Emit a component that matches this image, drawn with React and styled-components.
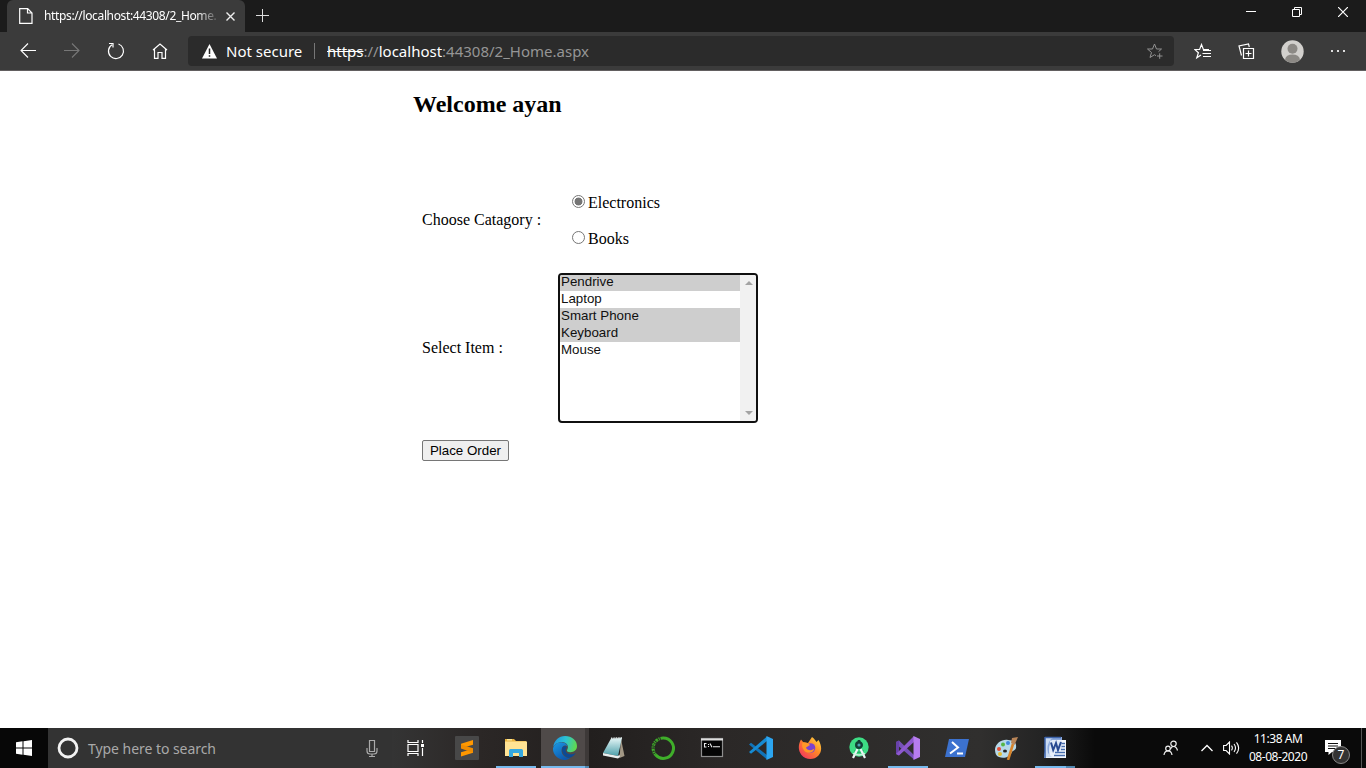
import React from 'react';
import styled, { createGlobalStyle } from 'styled-components';

const Global = createGlobalStyle`
  * { box-sizing: border-box; }
  body { margin: 0; background: #fff; overflow: hidden; }
`;
const ui = '"Noto Sans", "Open Sans", sans-serif';
const arial = '"Liberation Sans", Arial, sans-serif';
const serif = '"Liberation Serif", "Times New Roman", serif';

const Screen = styled.div`
  width: 1366px; height: 768px; display: flex; flex-direction: column;
`;
const Icon = styled.svg.attrs((p) => ({ viewBox: `0 0 ${p.$w} ${p.$h || p.$w}` }))`
  width: ${(p) => p.$w}px; height: ${(p) => p.$h || p.$w}px;
  display: block; flex: none; fill: none; margin-left: ${(p) => p.$left || 0}px;
  stroke: ${(p) => p.$c || 'none'}; stroke-width: ${(p) => p.$s || 1.2};
`;
const TitleBar = styled.header`
  height: 32px; background: #1b1b1b; display: flex; align-items: flex-start; padding-left: 7px;
`;
const Tab = styled.div`
  width: 238px; height: 32px; background: #3b3b3b; border-radius: 6px 6px 0 0;
  display: flex; align-items: center; padding: 0 9px 0 12px;
`;
const TabTitle = styled.span`
  margin-left: 11px; width: 173px; white-space: nowrap;
  font: 12px/20px ${ui}; letter-spacing: -0.36px; color: #fff;
  mask-image: linear-gradient(90deg, #000 88%, rgba(0, 0, 0, 0.15) 100%);
`;
const NewTab = styled.div` padding: 9px 0 0 11px; `;
const WindowButtons = styled.div`
  margin-left: auto; display: flex; height: 24px; align-items: center;
`;
const WindowButton = styled.div`
  width: 46px; height: 24px; display: flex; align-items: center; justify-content: center;
`;
const Toolbar = styled.nav`
  height: 39px; background: #3b3b3b; border-bottom: 1px solid #625f60;
  display: flex; align-items: center; padding: 0 0 0 6px;
`;
const ToolButton = styled.div`
  width: ${(p) => p.$w || 44}px; height: 38px; display: flex; align-items: center; justify-content: center;
`;
const ToolGroup = styled.div`
  display: flex; margin-left: ${(p) => p.$gap || 0}px;
`;
const Address = styled.div`
  width: 986px; flex: none; height: 30px; margin-left: 6px; background: #2b2b2b; border-radius: 4px;
  display: flex; align-items: center; padding: 0 10px 0 13px;
  font: 15px/24px ${ui}; white-space: pre; color: #fff;
`;
const Security = styled.span` margin-left: 8px; width: 88px; `;
const Divider = styled.i` width: 1px; height: 16px; background: #777; margin-right: 12px; `;
const Url = styled.span`
  flex: 1; color: #959595;
  b { font-weight: 400; color: #fff; }
  s { color: #fff; }
`;

const Page = styled.main`
  flex: 1; background: #fff; padding-left: 413px;
  font: 16px/18px ${serif}; color: #000;
`;
const Heading = styled.h2`
  margin: 0; padding-top: 20px; height: 110px; font: bold 24px/27px ${serif};
`;
const Row = styled.div`
  display: flex; align-items: center; height: ${(p) => p.$h}px; padding-left: 9px;
`;
const Label = styled.div` width: 136px; padding-bottom: ${(p) => p.$bottom || 0}px; `;
const RadioList = styled.div` display: flex; flex-direction: column; gap: 18px; padding-left: 14px; `;
const RadioRow = styled.label` display: flex; align-items: flex-start; height: 18px; gap: 3px; `;
const Dot = styled.span`
  width: 13px; height: 13px; margin-top: 1px; border: 1px solid #767676; border-radius: 50%;
  background: ${(p) => (p.$on ? 'radial-gradient(circle, #757575 3.6px, #fff 4.3px)' : '#fff')};
`;
const RadioText = styled.span``;
const ListBox = styled.div`
  width: 200px; height: 150px; border: 2px solid #101010; border-radius: 4px;
  display: flex; overflow: hidden;
`;
const Options = styled.div` flex: 1; margin-top: -1px; `;
const Option = styled.div`
  height: 17px; padding-left: 1px; font: 13.33px/15px ${arial};
  color: #101010; background: ${(p) => (p.$on ? '#cecece' : '#fff')};
`;
const Scroll = styled.div`
  width: 16px; background: #f1f1f1; display: flex; flex-direction: column;
  justify-content: space-between; align-items: center; padding: 6px 0 6px 1px;
`;
const OrderButton = styled.button`
  width: 87px; height: 21px; padding: 0; border: 1px solid #767676; border-radius: 2px;
  background: #efefef; color: #000; font: 13.33px/17px ${arial};
`;

const Taskbar = styled.footer`
  height: 40px; display: flex; align-items: stretch; color: #fff;
  background: linear-gradient(90deg, #070707 0 48px, #343434 392px, #2b2726 480px, #221f1e 590px, #2b2827 720px, #302f2e 980px, #242424 1040px, #0a0a0a 1095px, #0a0a0a);
`;
const Start = styled.div` width: 48px; display: flex; align-items: center; justify-content: center; `;
const Search = styled.div`
  width: 344px; background: #333; display: flex; align-items: center; padding: 0 14px 0 9px;
  font: 14px/20px ${ui}; color: #a9a9a9;
`;
const SearchText = styled.span` margin-left: 9px; flex: 1; padding-top: 1px; letter-spacing: -0.05px; `;
const TaskView = styled.div` width: 51px; display: flex; align-items: center; padding-left: 15px; `;
const AppSlot = styled.div`
  width: 49px; padding-left: 4px; display: flex; align-items: center;
`;
const AppFace = styled.div`
  flex: 0 0 ${(p) => (p.$active ? 44 : 40)}px; height: 40px; display: flex; align-items: center; justify-content: center;
  margin-left: ${(p) => (p.$active ? -4 : 0)}px;
  background: ${(p) => (p.$active ? '#4f4a49' : 'transparent')};
  border-bottom: 2px solid ${(p) => (p.$open ? '#76b9ed' : 'transparent')};
  padding: 1px 0 0 ${(p) => (p.$active ? 4 : 0)}px;
`;
const Stack = styled.div`
  flex: none; width: ${(p) => p.$w}px; height: 40px; margin-left: ${(p) => p.$shift}px;
  background: ${(p) => p.$bg}; border-bottom: 2px solid #5288b1;
`;
const Tray = styled.div` margin-left: auto; display: flex; align-items: center; `;
const Clock = styled.div`
  width: 66px; margin-left: 4px; text-align: center; font: 12px/18px ${ui}; letter-spacing: -0.45px; white-space: nowrap;
`;
const Notice = styled.div`
  position: relative; margin: 0 4px 0 14px; width: 37px; height: 40px; padding-top: 12px; border-right: 1px solid #555;
`;
const Badge = styled.span`
  position: absolute; left: 7px; top: 18px; width: 18px; height: 18px; border-radius: 50%;
  background: #333; border: 1px solid #888; font: 12px/15px ${ui}; text-align: center;
`;

const icons = {
  sublime: (
    <Icon $w={24}><rect width="24" height="24" rx="1" fill="#484848" />
      <path d="M6 7.800L18 4v4.800L6 12.300z" fill="#ff9800" /><path d="M6 16.200L18 12.800v4L6 20.500z" fill="#ff9800" /><path d="M6 8.500l12 3.800v4.500L6 12.500z" fill="#f08c00" /></Icon>
  ),
  explorer: (
    <Icon $w={24}><path d="M1 3h9l2 2h10v15H1z" fill="#e9b23f" /><path d="M1 5.500h22V20H1z" fill="#ffe394" />
      <path d="M3 3.800h5" stroke="#fff4b0" /><path d="M5 21v-6.500q0-1.500 1.500-1.500h11q1.500 0 1.500 1.500V21h-4v-4H9v4z" fill="#35a8e0" /></Icon>
  ),
  edge: (
    <Icon $w={24}><defs>
      <linearGradient id="eg" x1="0" y1=".3" x2="1" y2=".5"><stop stopColor="#1f93e0" /><stop offset=".5" stopColor="#2cc4d3" /><stop offset="1" stopColor="#61d84b" /></linearGradient>
      <linearGradient id="eb" x1="0" y1="0" x2=".6" y2="1"><stop stopColor="#1b9be6" /><stop offset="1" stopColor="#0d57ac" /></linearGradient></defs>
      <path d="M.2 11C1 4.500 6 0 12 0c7 0 12 4.500 12 10 0 4-3 6.200-6.500 6.200-3 0-4.300-1.200-3.300-2.500C16.500 10 13.500 6 9 6 5 6 1.700 8.500.2 11z" fill="url(#eg)" />
      <path d="M0 12C1.500 8 5 6 8.500 6.200c3.500.2 5.500 2 6.300 4.300-3-2.500-6.300 0-6.300 4 0 4.500 4 7.500 8.500 7.700-1.500 1.100-3.800 1.800-5.500 1.800C4.500 23.700-.5 18 0 12z" fill="url(#eb)" />
      <path d="M9.500 11c-1.500 4.500 1 9.500 6.500 11 3-.8 5-2.500 6.800-5-4 2.500-10.300 1.500-10.300-3 0-1 .6-1.700 1.300-2.300-.8-1.700-2.800-1.800-4.300-.7z" fill="#0c4a94" /></Icon>
  ),
  notepad: (
    <Icon $w={24}><defs><linearGradient id="np" x1="0" y1="0" x2="0" y2="1"><stop stopColor="#e5f5f6" /><stop offset="1" stopColor="#4c9faa" /></linearGradient></defs>
      <path d="M19 3l3.500 17-5 2z" fill="#a29784" /><path d="M9 2.500l11-.5-4 18L1 17z" fill="url(#np)" /><path d="M1 17l15 3 1.500-1.500.5 2.500-2 1.500-15-3z" fill="#e9eeee" /><path d="M9 2.500l11-.5" stroke="#d8e2e2" strokeWidth="2" strokeDasharray="1 .7" /></Icon>
  ),
  anaconda: (
    <Icon $w={24}><path d="M12 2A10.200 10.200 0 1 1 4.500 18.800" stroke="#3fae2a" strokeWidth="3" />
      <path d="M12 2A10.200 10.200 0 0 0 4.500 18.800" stroke="#3fae2a" strokeWidth="3" strokeDasharray="2.500 .8 1.200 .8" /><path d="M8.500 3A10 10 0 0 0 2.500 15" stroke="#292625" strokeWidth=".7" strokeDasharray="2 1.500" /></Icon>
  ),
  cmd: (
    <Icon $w={24}><rect x="1.500" y="2.500" width="21" height="18" fill="#050505" stroke="#8e8e8e" /><path d="M1 3.500h22" stroke="#ddd" strokeWidth="2" />
      <path d="M6.500 7.500H4.500v3.500h2M8.500 8v1m0 1v1M10 7.500l2 3.800M13 10.800h7" stroke="#eee" strokeWidth="1.100" /></Icon>
  ),
  vscode: (
    <Icon $w={24}><path d="M0 8.500l2-1.700L18 19v4.500L0 8.500z" fill="#1173b8" /><path d="M0 16l2 1.700L18 5V.5z" fill="#168bd3" /><path d="M17.500 0L24 3v18l-6.500 3z" fill="#2ca5f0" /></Icon>
  ),
  firefox: (
    <Icon $w={24}><defs><linearGradient id="ff" x1="1" y1="0" x2=".1" y2="1"><stop stopColor="#ffe24a" /><stop offset=".45" stopColor="#ff8a25" /><stop offset="1" stopColor="#f22c65" /></linearGradient></defs>
      <path d="M3 3.500l2.500 3L10 7l4-6c3 2 3.500 4 4.500 5l2-2c3 5 4 11 0 15.500-4.500 5-13 4.500-17-.5C-.5 14 .5 8 3 3.500z" fill="url(#ff)" />
      <circle cx="12.500" cy="12" r="4.800" fill="#7a42d0" /><path d="M4.500 6.500c3-.5 6 .5 7.500 2.500l-4 2.500c1 3 5 4 8.500 1-1 5-8.500 6-11 1C3.700 11.300 4 9 4.500 6.500z" fill="#ff9827" /></Icon>
  ),
  studio: (
    <Icon $w={24}><circle cx="12" cy="11" r="9.700" fill="#3ddc84" /><path d="M7.500 14.500q4.500 3.500 9 0" stroke="#1c9c60" strokeWidth="1.200" />
      <path d="M10.500 13L6 22M13.500 13l4.500 9" stroke="#eef3f4" strokeWidth="2.200" /><path d="M6 17.500q6 3 12 0" stroke="#d5efe2" strokeWidth="1.300" /><path d="M12 4v3" stroke="#123f35" strokeWidth="2.600" /><circle cx="12" cy="9" r="2.800" stroke="#123f35" strokeWidth="2.400" fill="#4e9fb0" /></Icon>
  ),
  vs: (
    <Icon $w={24}><path d="M0 6l3-1.500L18 19v4.500L0 8z" fill="#7651b8" /><path d="M0 6v12l3 1.500V4.500z" fill="#6841aa" /><path d="M0 18l3 1.500L18 6V0z" fill="#8e59cf" /><path d="M17.500 0L24 3v18l-6.500 3z" fill="#b77df0" /></Icon>
  ),
  powershell: (
    <Icon $w={24}><path d="M4 3h20l-4 18H0z" fill="#3c72cf" /><path d="M7 6l6 5.500-8 6M12 17.500h6" stroke="#fff" strokeWidth="2" /></Icon>
  ),
  paint: (
    <Icon $w={24}><path d="M1 13C2 7 8 3 14 4c6 0 9 3 8 8-1 3-3 2-4 4-2 5-8 7-13 5-3-1-4-4-4-8z" fill="#b6d8e8" />
      <circle cx="9" cy="8.500" r="2" fill="#55b745" /><circle cx="5" cy="13" r="2" fill="#e44c35" /><circle cx="6" cy="18" r="2" fill="#e6bd30" /><circle cx="14" cy="7" r="2" fill="#4288dc" /><ellipse cx="11" cy="15" rx="2" ry="1.500" fill="#242424" />
      <path d="M14 24l5-16" stroke="#d7842a" strokeWidth="2.600" /><path d="M17 7l1-5 6-1-3.500 8z" fill="#b98558" /></Icon>
  ),
  word: (
    <Icon $w={24}><path d="M5 1h13v21H1z" fill="#e8effa" /><path d="M5 1h14v3H9Q5 10 6.500 20H1z" fill="#8aa8dc" /><path d="M8 3Q3 9 5 17l4 4H2V1h10z" fill="#c9daf2" />
      <path d="M2 1v21M2 1.500h16" stroke="#3d63aa" strokeWidth="1.500" /><path d="M15 4h8v18H10l5-5z" fill="#f6f9fe" /><path d="M7 4.500h12v10L6.500 16z" fill="#dfe9f7" />
      <path d="M8 6.500l2.200 7.500L13 7l2 7 3-8" stroke="#284a91" strokeWidth="2" /><path d="M18.500 7.500H22M18.500 10.500H22M18 13.500h4M12 16.500h10M11 19.500h11" stroke="#456cad" strokeWidth="1.300" /></Icon>
  ),
};

const apps = [
  { name: 'sublime' },
  { name: 'explorer', open: true },
  { name: 'edge', open: true, active: true, stack: { w: 4, shift: 0, bg: '#3d3938' } },
  { name: 'notepad' },
  { name: 'anaconda' },
  { name: 'cmd' },
  { name: 'vscode' },
  { name: 'firefox' },
  { name: 'studio' },
  { name: 'vs', open: true },
  { name: 'powershell' },
  { name: 'paint' },
  { name: 'word', open: true, stack: { w: 9, shift: -9, bg: 'transparent' } },
];
const items = [['Pendrive', true], ['Laptop', false], ['Smart Phone', true], ['Keyboard', true], ['Mouse', false]];

export default function App() {
  return (
    <Screen>
      <Global />
      <TitleBar>
        <Tab>
          <Icon $w={14} $h={16} $c="#fff"><path d="M.7.700h8L13 5v10.300H.7zM8.500.700V5H13" /></Icon>
          <TabTitle>https://localhost:44308/2_Home.</TabTitle>
          <Icon $w={9} $c="#eee" $s={1.400} $left={9}><path d="M.5.500l8 8M8.500.500l-8 8" /></Icon>
        </Tab>
        <NewTab><Icon $w={13} $c="#ddd" $s={1}><path d="M6.500 0v13M0 6.500h13" /></Icon></NewTab>
        <WindowButtons>
          <WindowButton><Icon $w={10} $c="#fff" $s={1}><path d="M0 4.500h10" /></Icon></WindowButton>
          <WindowButton><Icon $w={10} $c="#fff" $s={1}><path d="M.5 2.500h7v7h-7zM2.500 2.500v-2h7v7h-2" /></Icon></WindowButton>
          <WindowButton><Icon $w={10} $c="#fff"><path d="M0 0l10 10M10 0L0 10" /></Icon></WindowButton>
        </WindowButtons>
      </TitleBar>
      <Toolbar>
        <ToolGroup>
          <ToolButton><Icon $w={16} $c="#fff" $s={1.100}><path d="M16 7.500H1M8 .5L1 7.500l7 7" /></Icon></ToolButton>
          <ToolButton><Icon $w={16} $c="#777" $s={1.100}><path d="M0 7.500h15M8 .5l7 7-7 7" /></Icon></ToolButton>
          <ToolButton><Icon $w={18} $c="#fff" $s={1.200}><path d="M11.500 2A7.500 7.500 0 1 1 5 2.700M2 1.500h4v4" /></Icon></ToolButton>
          <ToolButton><Icon $w={16} $c="#fff" $s={1.200}><path d="M1 7l7-6 7 6M2.500 6v9.300H6V9.500h4v5.800h3.500V6" /></Icon></ToolButton>
        </ToolGroup>
        <Address>
          <Icon $w={17} $h={16}><path d="M8.500 1L16 15.500H1z" fill="#fff" /><path d="M8.500 5.500v5.500M8.500 12.300v1.500" stroke="#222" strokeWidth="1.500" /></Icon>
          <Security>Not secure</Security>
          <Divider />
          <Url><s>https</s>://<b>localhost</b>:44308/2_Home.aspx</Url>
          <Icon $w={18} $c="#929292" $s={1}><path d="M15.500 7h-5L8.500 2 6.500 7h-5l4 3.500L4 15.500l4.500-2.800 1.500 1M15.500 7l-3 2.700M11 14h5.500M13.700 11.300v5.500" /></Icon>
        </Address>
        <ToolGroup $gap={7}>
          <ToolButton $w={43}><Icon $w={17} $c="#fff"><path d="M7 12L2.800 14.800l1.600-5L.8 6.500H5.600L7.500 1.500l1.900 5h5.600M9 7.500h8M8.500 10.500H17M9 13.500h8" /></Icon></ToolButton>
          <ToolButton $w={45}><Icon $w={17} $c="#fff"><path d="M5.500 5.500h10v10h-10zM10.500 7.500v6M7.500 10.500h6M3.500 12.500L1 3l9.500-2 .8 3" /></Icon></ToolButton>
          <ToolButton $w={46}><Icon $w={23}><circle cx="11.500" cy="11.500" r="11.200" fill="#d2d0cd" /><circle cx="11.500" cy="8.700" r="5" fill="#8c8985" /><path d="M4 19.500q1-5 7.500-5t7.500 5q-3 3.200-7.500 3.200T4 19.500z" fill="#8c8985" /></Icon></ToolButton>
          <ToolButton $w={46}><Icon $w={16} $h={4}><path d="M1 1h2v2H1zM7 1h2v2H7zM13 1h2v2h-2z" fill="#ddd" /></Icon></ToolButton>
        </ToolGroup>
      </Toolbar>

      <Page>
        <Heading>Welcome ayan</Heading>
        <Row $h={79}>
          <Label $bottom={2}>Choose Catagory :</Label>
          <RadioList>
            <RadioRow><Dot $on /><RadioText>Electronics</RadioText></RadioRow>
            <RadioRow><Dot /><RadioText>Books</RadioText></RadioRow>
          </RadioList>
        </Row>
        <Row $h={176}>
          <Label>Select Item :</Label>
          <ListBox>
            <Options>{items.map(([t, on]) => <Option key={t} $on={on}>{t}</Option>)}</Options>
            <Scroll>
              <Icon $w={8} $h={4}><path d="M0 4l4-4 4 4z" fill="#a3a3a3" /></Icon>
              <Icon $w={8} $h={4}><path d="M0 0l4 4 4-4z" fill="#a3a3a3" /></Icon>
            </Scroll>
          </ListBox>
        </Row>
        <Row $h={28}><OrderButton>Place Order</OrderButton></Row>
      </Page>

      <Taskbar>
        <Start><Icon $w={16}><path d="M0 2.200L6.500 1.300V7.500H0zM7.500 1.200L16 0v7.500H7.500zM0 8.500h6.500v6.200L0 13.800zM7.500 8.500H16V16l-8.500-1.200z" fill="#fff" /></Icon></Start>
        <Search>
          <Icon $w={22} $c="#f2f2f2" $s={2.800}><circle cx="11" cy="11" r="9" /></Icon>
          <SearchText>Type here to search</SearchText>
          <Icon $w={12} $h={17} $c="#aaa"><path d="M3.500.500h5v11h-5zM1 8v3q0 3 3 3h4q3 0 3-3V8M6 14v2.500M3 16.500h6" /></Icon>
        </Search>
        <TaskView><Icon $w={18} $h={16} $c="#fff"><path d="M1 4.500h10v7H1zM1 0v2.500h10V0M1 16v-2.500h10V16M15.500 0v3M15.500 8v8" /><path d="M14 4h3v3h-3z" fill="#fff" stroke="none" /></Icon></TaskView>
        {apps.map(({ name, open, active, stack }) => (
          <AppSlot key={name}>
            <AppFace $open={open} $active={active}>{icons[name]}</AppFace>
            {stack && <Stack $w={stack.w} $shift={stack.shift} $bg={stack.bg} />}
          </AppSlot>
        ))}
        <Tray>
          <Icon $w={16} $c="#eee"><circle cx="10.500" cy="3.800" r="2.700" /><path d="M7.500 9q1-2.500 3-2.500 3 0 4 4" /><circle cx="5" cy="8.500" r="2.300" /><path d="M1 15q.5-4.200 4-4.200t4 4.200" /></Icon>
          <Icon $w={12} $h={8} $c="#fff" $s={1.300} $left={22}><path d="M.5 7L6 1.500 11.500 7" /></Icon>
          <Icon $w={18} $h={14} $c="#fff" $s={1.100} $left={10}><path d="M.6 4.500h2.500L6.500 1v12L3.100 9.500H.6zM8.500 4.700q1.700 2.300 0 4.600M11 3q3 4 0 8M13.500 1.300q4.300 5.700 0 11.400" /></Icon>
          <Clock>11:38 AM<br />08-08-2020</Clock>
          <Notice><Icon $w={17} $h={16}><path d="M0 0h16v12H7l-3.500 3v-3H0z" fill="#fff" /><path d="M3 3.500h10M3 6h10M3 8.500h7" stroke="#111" strokeWidth="1" /></Icon><Badge>7</Badge></Notice>
        </Tray>
      </Taskbar>
    </Screen>
  );
}
